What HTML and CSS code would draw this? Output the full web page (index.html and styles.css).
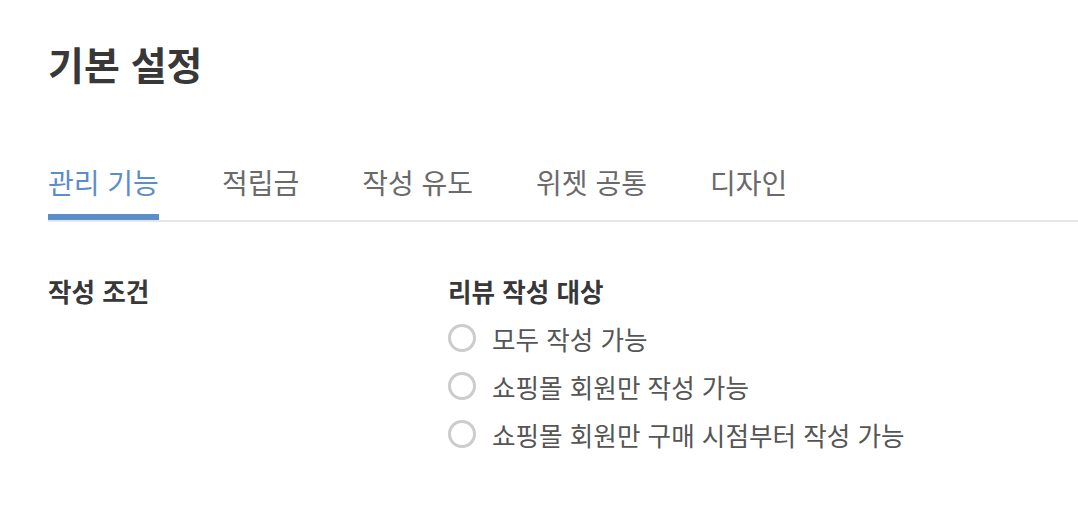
FILE: index.html
```html
<!DOCTYPE html>
<html lang="ko">
<head>
  <meta charset="UTF-8">
  <meta name="viewport" content="width=device-width, initial-scale=1.0">
  <title>기본 설정</title>
  <link rel="stylesheet" href="styles.css">
</head>
<body>
  <main class="page">
    <h1 class="page-title">기본 설정</h1>

    <nav class="tabs">
      <a class="tab active" href="#">관리 기능</a>
      <a class="tab" href="#">적립금</a>
      <a class="tab" href="#">작성 유도</a>
      <a class="tab" href="#">위젯 공통</a>
      <a class="tab" href="#">디자인</a>
    </nav>

    <section class="setting-row">
      <h2 class="setting-label">작성 조건</h2>
      <div class="setting-body">
        <h3 class="field-title">리뷰 작성 대상</h3>
        <label class="radio">
          <input type="radio" name="target">
          <span class="radio-mark"></span>
          <span>모두 작성 가능</span>
        </label>
        <label class="radio">
          <input type="radio" name="target">
          <span class="radio-mark"></span>
          <span>쇼핑몰 회원만 작성 가능</span>
        </label>
        <label class="radio">
          <input type="radio" name="target">
          <span class="radio-mark"></span>
          <span>쇼핑몰 회원만 구매 시점부터 작성 가능</span>
        </label>
      </div>
    </section>
  </main>
</body>
</html>
```

FILE: styles.css
```css
:root {
  --text-dark: #383838;
  --text-gray: #6a6a6a;
  --text-option: #555555;
  --primary: #5b8dcb;
  --line: #e6e6e6;
  --radio-border: #cccccc;
}

* {
  box-sizing: border-box;
  margin: 0;
  padding: 0;
}

body {
  font-family: "Noto Sans CJK KR", "Noto Sans", sans-serif;
  background: #ffffff;
  color: var(--text-dark);
}

.page {
  padding: 35px 0 0 48px;
}

.page-title {
  font-size: 39px;
  font-weight: 700;
  line-height: 56px;
  color: var(--text-dark);
}

.tabs {
  display: flex;
  gap: 63px;
  margin-top: 71px;
  border-bottom: 2px solid var(--line);
}

.tab {
  display: block;
  font-size: 28px;
  line-height: 40px;
  padding-bottom: 12px;
  color: var(--text-gray);
  text-decoration: none;
  border-bottom: 6px solid transparent;
}

.tab.active {
  color: var(--primary);
  border-bottom-color: var(--primary);
}

.setting-row {
  display: flex;
  margin-top: 51px;
}

.setting-label {
  width: 400px;
  font-size: 25.6px;
  font-weight: 700;
  line-height: 36px;
  color: var(--text-dark);
}

.field-title {
  font-size: 25.6px;
  font-weight: 700;
  line-height: 36px;
  color: var(--text-dark);
  margin-bottom: 5px;
}

.radio {
  display: flex;
  align-items: center;
  gap: 16px;
  height: 48px;
  font-size: 25.6px;
  color: var(--text-option);
  cursor: pointer;
}

.radio input {
  display: none;
}

.radio-mark {
  width: 28px;
  height: 28px;
  border: 3px solid var(--radio-border);
  border-radius: 50%;
}
```
